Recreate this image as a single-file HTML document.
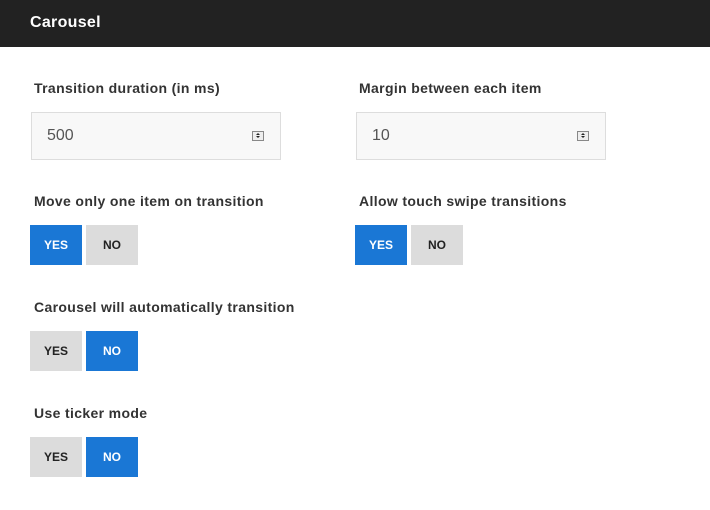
<!DOCTYPE html>
<html><head><style>
body{margin:0;width:710px;height:510px;background:#fff;font-family:"Liberation Sans",sans-serif;position:relative;overflow:hidden}
.hd{position:absolute;left:0;top:0;width:710px;height:47px;background:#222}
.hd span{position:absolute;left:30px;top:14px;color:#fff;font-weight:bold;font-size:16px;letter-spacing:0.3px}
.lb{position:absolute;font-weight:bold;font-size:14px;color:#333;line-height:18px;letter-spacing:0.35px}
.in{position:absolute;width:250px;height:48px;background:#f8f8f8;border:1px solid #ddd;box-sizing:border-box}
.in span{position:absolute;left:15px;top:14px;font-size:16px;color:#555}
.sp{position:absolute;right:16px;top:18px;width:12px;height:10px;border:1px solid #888;background:#eee;box-sizing:border-box}
.sp:before{content:"";position:absolute;left:3px;top:-1px;border:2px solid transparent;border-bottom:2px solid #222}
.sp:after{content:"";position:absolute;left:3px;top:4px;border:2px solid transparent;border-top:2px solid #222}
.b{position:absolute;width:52px;height:40px;font-weight:bold;font-size:12px;text-align:center;line-height:40px}
.on{background:#1a77d5;color:#fff}.off{background:#dcdcdc;color:#222}
</style></head><body>
<div class="hd"><span>Carousel</span></div>
<div class="lb" style="left:34px;top:79px">Transition duration (in ms)</div>
<div class="lb" style="left:359px;top:79px">Margin between each item</div>
<div class="in" style="left:31px;top:112px"><span>500</span><div class="sp"></div></div>
<div class="in" style="left:356px;top:112px"><span>10</span><div class="sp"></div></div>
<div class="lb" style="left:34px;top:192px">Move only one item on transition</div>
<div class="lb" style="left:359px;top:192px">Allow touch swipe transitions</div>
<div class="b on" style="left:30px;top:225px">YES</div><div class="b off" style="left:86px;top:225px">NO</div>
<div class="b on" style="left:355px;top:225px">YES</div><div class="b off" style="left:411px;top:225px">NO</div>
<div class="lb" style="left:34px;top:298px">Carousel will automatically transition</div>
<div class="b off" style="left:30px;top:331px">YES</div><div class="b on" style="left:86px;top:331px">NO</div>
<div class="lb" style="left:34px;top:404px">Use ticker mode</div>
<div class="b off" style="left:30px;top:437px">YES</div><div class="b on" style="left:86px;top:437px">NO</div>
</body></html>
